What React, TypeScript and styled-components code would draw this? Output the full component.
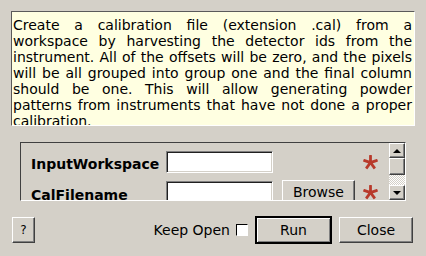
import React from 'react'
import styled, { createGlobalStyle } from 'styled-components'

const GlobalStyle = createGlobalStyle`
    html, body {
        margin: 0;
        padding: 0;
        width: 426px;
        height: 256px;
        overflow: hidden;
        background: #d4d0c8;
        font-family: "DejaVu Sans", "Liberation Sans", sans-serif;
        font-size: 14px;
        color: #000;
    }
    * { box-sizing: border-box; }
`

const description =
    'Create a calibration file (extension .cal) from a workspace by harvesting the detector ids from the instrument. All of the offsets will be zero, and the pixels will be all grouped into group one and the final column should be one. This will allow generating powder patterns from instruments that have not done a proper calibration.'

function Asterisk() {
    const arms = [0, 72, 144, 216, 288]
    return (
        <AsteriskIcon width='15' height='15' viewBox='-7.5 -7.5 15 15'>
            {arms.map((a) => (
                <rect key={a} x='-1.4' y='-7.5' width='2.8' height='7.5' rx='0.6' fill='#b83a2b' transform={`rotate(${a})`} />
            ))}
            <circle r='2.2' fill='#b83a2b' />
        </AsteriskIcon>
    )
}

export default function App() {
    return (
        <Dialog>
            <GlobalStyle />
            <Description>{description}</Description>

            <ParamFrame>
                <ParamList>
                    <ParamRow>
                        <ParamLabel>InputWorkspace</ParamLabel>
                        <TextInput />
                        <Spacer />
                        <Asterisk />
                    </ParamRow>
                    <ParamRow>
                        <ParamLabel $low>CalFilename</ParamLabel>
                        <TextInput />
                        <Button $width={73} $height={24}>Browse</Button>
                        <Asterisk />
                    </ParamRow>
                </ParamList>
                <ScrollBar>
                    <ScrollButton><Arrow $up /></ScrollButton>
                    <ScrollHandle />
                    <ScrollTrack />
                    <ScrollButton><Arrow /></ScrollButton>
                </ScrollBar>
            </ParamFrame>

            <ButtonRow>
                <Button $width={23} $height={26} $small>?</Button>
                <Grow />
                <KeepOpen>
                    Keep Open
                    <CheckBox />
                </KeepOpen>
                <Button $width={77} $height={28} $default>Run</Button>
                <Button $width={74} $height={26}>Close</Button>
            </ButtonRow>
        </Dialog>
    )
}

const Dialog = styled.div`
    display: flex;
    flex-direction: column;
    padding: 11px 11px 0 11px;
`

const Description = styled.div`
    height: 115px;
    overflow: hidden;
    background: #ffffe1;
    border: 1px solid;
    border-color: #5a5a5a #ffffff #ffffff #5a5a5a;
    padding: 5px 2px 0 1px;
    line-height: 16px;
    text-align: justify;
`

const ParamFrame = styled.div`
    display: flex;
    height: 59px;
    margin: 16px 9px 0 9px;
    border: 1px solid;
    border-color: #404040 #ffffff #ffffff #404040;
`

const ParamList = styled.div`
    flex: 1;
    overflow: hidden;
    display: flex;
    flex-direction: column;
    gap: 7px;
    padding: 8px 0 0 10px;
`

const ParamRow = styled.div`
    display: grid;
    grid-template-columns: 135px 107px 82px 23px;
    align-items: center;
    height: 24px;

    & > button, & > svg { justify-self: end; }
`

const ParamLabel = styled.span<{ $low?: boolean }>`
    font-weight: bold;
    padding-top: ${({ $low }) => ($low ? '6px' : '3px')};
`

const TextInput = styled.div`
    height: 22px;
    background: #fff;
    border: 1px solid;
    border-color: #808080 #ffffff #ffffff #808080;
    box-shadow: inset 1px 1px 0 #202020, inset -1px -1px 0 #d4d0c8;
`

const Spacer = styled.span``

const AsteriskIcon = styled.svg`
    display: block;
`

const ScrollBar = styled.div`
    width: 16px;
    display: flex;
    flex-direction: column;
`

const bevel = `
    background: #d4d0c8;
    border: 1px solid;
    border-color: #ffffff #404040 #404040 #ffffff;
    box-shadow: inset -1px -1px 0 #808080;
`

const ScrollButton = styled.div`
    ${bevel}
    height: 15px;
    display: flex;
    align-items: center;
    justify-content: center;
`

const ScrollHandle = styled.div`
    ${bevel}
    height: 17px;
`

const ScrollTrack = styled.div`
    height: 10px;
    background-image: repeating-conic-gradient(#ffffff 0 25%, #d4d0c8 0 50%);
    background-size: 2px 2px;
`

const Arrow = styled.span<{ $up?: boolean }>`
    width: 0;
    height: 0;
    border-left: 4px solid transparent;
    border-right: 4px solid transparent;
    ${({ $up }) => ($up ? 'border-bottom: 4px solid #000;' : 'border-top: 4px solid #000;')}
`

const ButtonRow = styled.div`
    display: flex;
    align-items: center;
    gap: 7px;
    margin: 15px 2px 0 1px;
`

const Grow = styled.div`
    flex: 1;
`

const Button = styled.button<{ $width: number; $height: number; $default?: boolean; $small?: boolean }>`
    width: ${({ $width }) => $width}px;
    height: ${({ $height }) => $height}px;
    padding: 0;
    font-family: inherit;
    font-size: ${({ $small }) => ($small ? '12px' : '14px')};
    color: #000;
    background: #d4d0c8;
    border: 1px solid;
    border-color: #ffffff #404040 #404040 #ffffff;
    box-shadow: inset -1px -1px 0 #808080;
    ${({ $default }) =>
        $default &&
        `
        border: 2px solid #000;
        box-shadow: inset 1px 1px 0 #ffffff, inset -1px -1px 0 #808080;
    `}
`

const KeepOpen = styled.label`
    display: flex;
    align-items: center;
    gap: 6px;
`

const CheckBox = styled.span`
    width: 12px;
    height: 12px;
    background: #fff;
    border: 1px solid;
    border-color: #000 #ffffff #ffffff #000;
`
